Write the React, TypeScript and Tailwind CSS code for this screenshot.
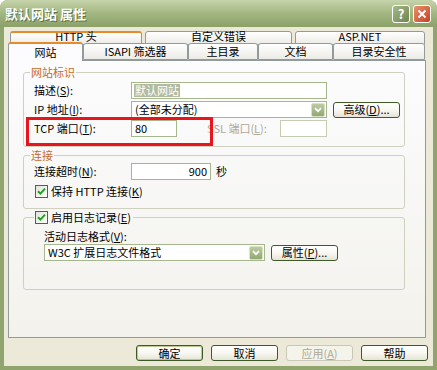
import React from 'react'
import clsx from 'clsx'

function Key({ k }: { k: string }) {
  return (
    <span>
      (<span className="underline">{k}</span>)
    </span>
  )
}

function Chevron() {
  return (
    <svg width="8" height="6" viewBox="0 0 8 6">
      <path d="M1 1.2 L4 4.2 L7 1.2" stroke="white" strokeWidth="1.8" fill="none" />
    </svg>
  )
}

function Check({ checked }: { checked?: boolean }) {
  return (
    <div className="flex h-[13px] w-[13px] shrink-0 items-center justify-center border border-[#4d5f72] bg-gradient-to-br from-[#e3e3dc] to-white">
      {checked && (
        <svg width="9" height="9" viewBox="0 0 9 9">
          <path d="M1 4.2 L3.4 6.6 L8 1.6" stroke="#21a121" strokeWidth="2" fill="none" />
        </svg>
      )}
    </div>
  )
}

function Btn({
  children,
  className,
  def,
  disabled,
}: {
  children: React.ReactNode
  className?: string
  def?: boolean
  disabled?: boolean
}) {
  return (
    <div
      className={clsx(
        'flex h-[16px] items-center justify-center rounded-[3px] border text-[11px]',
        disabled
          ? 'border-[#c9c7ba] bg-[#f5f4ea] text-[#aca899]'
          : 'border-[#3f5a26] bg-gradient-to-b from-white via-[#f8f7f1] to-[#e6e4d8] text-black',
        def && 'shadow-[inset_0_0_0_1px_#b7ca92]',
        className
      )}
    >
      {children}
    </div>
  )
}

function Select({ children, className }: { children: React.ReactNode; className?: string }) {
  return (
    <div className={clsx('flex h-[17px] items-center border border-[#a5b78d] bg-white pl-[3px] pr-[1px]', className)}>
      <span className="flex-1 truncate">{children}</span>
      <div className="flex h-[14px] w-[14px] items-center justify-center rounded-[2px] border border-[#d8e0c6] bg-gradient-to-b from-[#bccba0] to-[#93a874]">
        <Chevron />
      </div>
    </div>
  )
}

function Tab({
  label,
  className,
  hot,
  selected,
  back,
}: {
  label: string
  className: string
  hot?: boolean
  selected?: boolean
  back?: boolean
}) {
  return (
    <div
      className={clsx(
        'flex shrink-0 justify-center rounded-t-[3px] border border-[#919b9c] text-[11px]',
        hot && 'border-t-2 border-t-[#e68b2c]',
        selected
          ? 'relative z-10 -mb-[1px] h-[19px] items-center border-b-0 bg-[#fcfcfe]'
          : 'bg-gradient-to-b from-white to-[#ecebe6]',
        className
      )}
    >
      <span className={clsx(back && '-mt-[2px]')}>{label}</span>
    </div>
  )
}

export default function App() {
  return (
    <div className="flex h-[370px] w-[437px] flex-col overflow-hidden rounded-t-[8px] bg-[#8fa56d] font-['Noto_Sans_CJK_SC',sans-serif] text-black">
      {/* Title bar */}
      <div className="flex h-[27px] shrink-0 items-center justify-between bg-gradient-to-b from-[#c6d4ab] via-[#a2b681] to-[#8ba168] pl-[5px] pr-[6px]">
        <span className="text-[13px] font-bold text-white [text-shadow:1px_1px_0_#5d7040]">默认网站 属性</span>
        <div className="flex gap-[3px]">
          <div className="flex h-[18px] w-[18px] items-center justify-center rounded-[3px] border border-white bg-gradient-to-br from-[#a7b98a] to-[#6e8650] text-[13px] font-bold leading-none text-white">
            ?
          </div>
          <div className="flex h-[18px] w-[18px] items-center justify-center rounded-[3px] border border-white bg-gradient-to-br from-[#e8906e] to-[#c3411e]">
            <svg width="10" height="10" viewBox="0 0 10 10">
              <path d="M1.5 1.5 L8.5 8.5 M8.5 1.5 L1.5 8.5" stroke="white" strokeWidth="1.9" />
            </svg>
          </div>
        </div>
      </div>

      {/* Body */}
      <div className="mx-[4px] mb-[4px] flex flex-1 flex-col bg-[#ece9d8] pt-[4px]">
        {/* Tabs row 1 */}
        <div className="ml-[6px] flex h-[12px] gap-[3px] leading-[11px]">
          <Tab label="HTTP 头" className="h-[14px] w-[132px] items-start" hot back />
          <Tab label="自定义错误" className="h-[14px] w-[147px] items-start pt-[1px]" back />
          <Tab label="ASP.NET" className="h-[14px] w-[130px] items-start pt-[1px]" back />
        </div>
        {/* Tabs row 2 */}
        <div className="relative -mt-[1px] ml-[4px] flex h-[18px] items-end">
          <Tab label="网站" className="w-[75px]" hot selected />
          <Tab label="ISAPI 筛选器" className="h-[17px] w-[105px] items-center" />
          <Tab label="主目录" className="h-[17px] w-[70px] items-center" />
          <Tab label="文档" className="h-[17px] w-[75px] items-center" />
          <Tab label="目录安全性" className="h-[17px] w-[92px] items-center" />
        </div>

        {/* Panel */}
        <div className="ml-[4px] h-[278px] w-[418px] border border-[#919b9c] bg-gradient-to-b from-[#fcfcfe] to-[#f3f2ec] pl-[14px] pt-[3px] text-[11px]">
          {/* 网站标识 */}
          <fieldset className="h-[83px] w-[382px] rounded-[3px] border border-[#d0d0bf]">
            <legend className="ml-[6px] px-[1px] leading-[16px] text-[#c76a2a]">网站标识</legend>
            <div className="relative mt-[2px] flex flex-col gap-[2px] pl-[10px]">
              <div className="flex h-[17px] items-center">
                <span className="w-[97px]">
                  描述<Key k="S" />:
                </span>
                <div className="flex h-[17px] w-[196px] items-center border border-[#a5b78d] bg-white pl-[2px]">
                  <span className="bg-[#b2bb9f] px-[1px] leading-[13px] text-white">默认网站</span>
                </div>
              </div>
              <div className="flex h-[17px] items-center">
                <span className="w-[97px]">
                  IP 地址<Key k="I" />:
                </span>
                <Select className="w-[196px]">(全部未分配)</Select>
                <Btn className="ml-[6px] w-[67px]">
                  高级<Key k="D" />...
                </Btn>
              </div>
              <div className="flex h-[17px] items-center">
                <span className="w-[97px]">
                  TCP 端口<Key k="T" />:
                </span>
                <div className="flex h-[17px] w-[46px] items-center border border-[#a5b78d] bg-white pl-[3px]">80</div>
                <span className="ml-[30px] w-[73px] text-[#aca899]">
                  SSL 端口<Key k="L" />:
                </span>
                <div className="h-[17px] w-[47px] border border-[#c3cdb0] bg-white" />
              </div>
              {/* red annotation */}
              <div className="pointer-events-none absolute left-[2px] top-[35px] h-[29px] w-[187px] border-[3px] border-[#e8161c]" />
            </div>
          </fieldset>

          {/* 连接 */}
          <fieldset className="h-[62px] w-[382px] rounded-[3px] border border-[#d0d0bf]">
            <legend className="ml-[6px] px-[1px] leading-[16px] text-[#c76a2a]">连接</legend>
            <div className="flex flex-col pl-[10px]">
              <div className="flex h-[17px] items-center">
                <span className="w-[97px]">
                  连接超时<Key k="N" />:
                </span>
                <div className="flex h-[17px] w-[80px] items-center justify-end border border-[#a5b78d] bg-white pr-[3px]">900</div>
                <span className="ml-[5px]">秒</span>
              </div>
              <div className="mt-[5px] flex h-[13px] items-center gap-[3px] pl-[1px]">
                <Check checked />
                <span>
                  保持 HTTP 连接<Key k="K" />
                </span>
              </div>
            </div>
          </fieldset>

          {/* 启用日志记录 */}
          <fieldset className="h-[81px] w-[382px] rounded-[3px] border border-[#d0d0bf]">
            <legend className="ml-[10px] flex h-[16px] items-center gap-[3px] pl-[1px] pr-[2px]">
              <Check checked />
              <span>
                启用日志记录<Key k="E" />
              </span>
            </legend>
            <div className="mt-[4px] flex flex-col pl-[20px]">
              <div className="flex h-[15px] items-center">
                活动日志格式<Key k="V" />:
              </div>
              <div className="flex h-[17px] items-center">
                <Select className="w-[221px]">W3C 扩展日志文件格式</Select>
                <Btn className="ml-[6px] w-[67px]">
                  属性<Key k="P" />...
                </Btn>
              </div>
            </div>
          </fieldset>
        </div>

        {/* Dialog buttons */}
        <div className="mt-[7px] flex justify-end gap-[8px] pr-[5px]">
          <Btn className="w-[67px]" def>
            确定
          </Btn>
          <Btn className="w-[67px]">取消</Btn>
          <Btn className="w-[67px]" disabled>
            应用<Key k="A" />
          </Btn>
          <Btn className="w-[67px]">帮助</Btn>
        </div>
      </div>
    </div>
  )
}
